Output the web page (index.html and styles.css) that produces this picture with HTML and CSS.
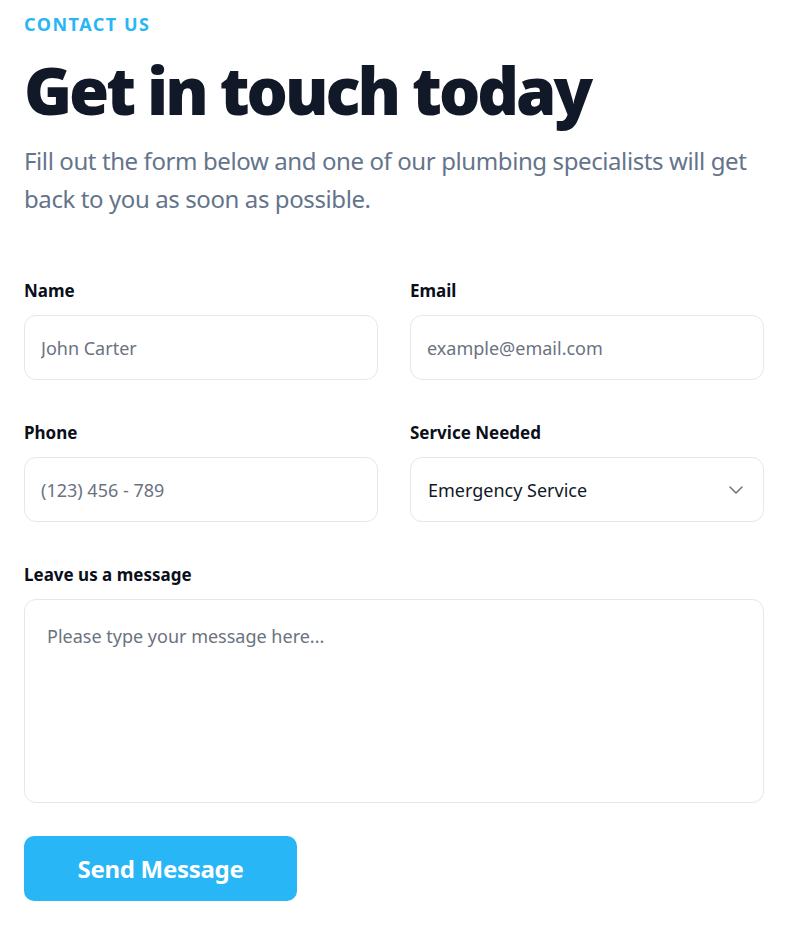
FILE: index.html
```html
<!DOCTYPE html>
<html lang="en">
<head>
<meta charset="utf-8">
<title>Contact</title>
<link rel="stylesheet" href="styles.css">
</head>
<body>
<main class="contact">
  <p class="eyebrow">CONTACT US</p>
  <h1 class="title">Get in touch today</h1>
  <p class="lead">Fill out the form below and one of our plumbing specialists will get back to you as soon as possible.</p>
  <form class="form">
    <div class="grid">
      <label class="field">
        <span class="label">Name</span>
        <input class="input" type="text" placeholder="John Carter">
      </label>
      <label class="field">
        <span class="label">Email</span>
        <input class="input" type="email" placeholder="example@email.com">
      </label>
      <label class="field">
        <span class="label">Phone</span>
        <input class="input" type="tel" placeholder="(123) 456 - 789">
      </label>
      <label class="field">
        <span class="label">Service Needed</span>
        <span class="select">
          <span class="select-value">Emergency Service</span>
          <svg class="chev" width="14" height="8" viewBox="0 0 14 8" fill="none"><path d="M1 1l6 6 6-6" stroke="#6b7280" stroke-width="1.5" stroke-linecap="round" stroke-linejoin="round"/></svg>
        </span>
      </label>
      <label class="field full">
        <span class="label">Leave us a message</span>
        <textarea class="textarea" placeholder="Please type your message here..."></textarea>
      </label>
    </div>
    <button class="btn" type="button">Send Message</button>
  </form>
</main>
</body>
</html>
```
FILE: styles.css
```css
* { box-sizing: border-box; }
body {
  margin: 0;
  background: #fff;
  font-family: "Noto Sans", "Open Sans", sans-serif;
  color: #111827;
}
.contact {
  width: 788px;
  padding: 12px 24px 24px 24px;
}
.eyebrow {
  margin: 0;
  font-size: 18px;
  font-weight: 700;
  letter-spacing: 1.5px;
  color: #29b6f6;
  line-height: 24px;
}
.title {
  margin: 10px 0 0 0;
  font-size: 65px;
  font-weight: 900;
  line-height: 88px;
  letter-spacing: -3px;
  color: #111827;
}
.lead {
  margin: 8px 0 0 0;
  font-size: 24px;
  line-height: 38px;
  letter-spacing: -0.4px;
  color: #64748b;
  max-width: 760px;
}
.form {
  margin-top: 63px;
  width: 740px;
}
.grid {
  display: grid;
  grid-template-columns: 1fr 1fr;
  column-gap: 32px;
  row-gap: 43px;
}
.field {
  display: flex;
  flex-direction: column;
  gap: 14px;
}
.full { grid-column: 1 / -1; }
.label {
  font-size: 17px;
  font-weight: 700;
  line-height: 20px;
  color: #0b0f1a;
}
.input, .select, .textarea {
  border: 1px solid #e2e8f0;
  border-radius: 12px;
  background: #fff;
  font-family: inherit;
  font-size: 18px;
  color: #111827;
}
.input {
  height: 65px;
  padding: 1px 16px 0 16px;
  outline: none;
}
.input::placeholder, .textarea::placeholder { color: #6b7280; }
.select {
  height: 65px;
  padding: 1px 20px 0 17px;
  display: flex;
  align-items: center;
  justify-content: space-between;
}
.textarea {
  height: 204px;
  padding: 24px 22px;
  resize: none;
  outline: none;
}
.btn {
  margin-top: 33px;
  width: 273px;
  height: 65px;
  border: none;
  border-radius: 10px;
  background: #29b6f6;
  color: #fff;
  font-family: inherit;
  font-size: 24px;
  font-weight: 700;
  letter-spacing: -0.3px;
}
```
